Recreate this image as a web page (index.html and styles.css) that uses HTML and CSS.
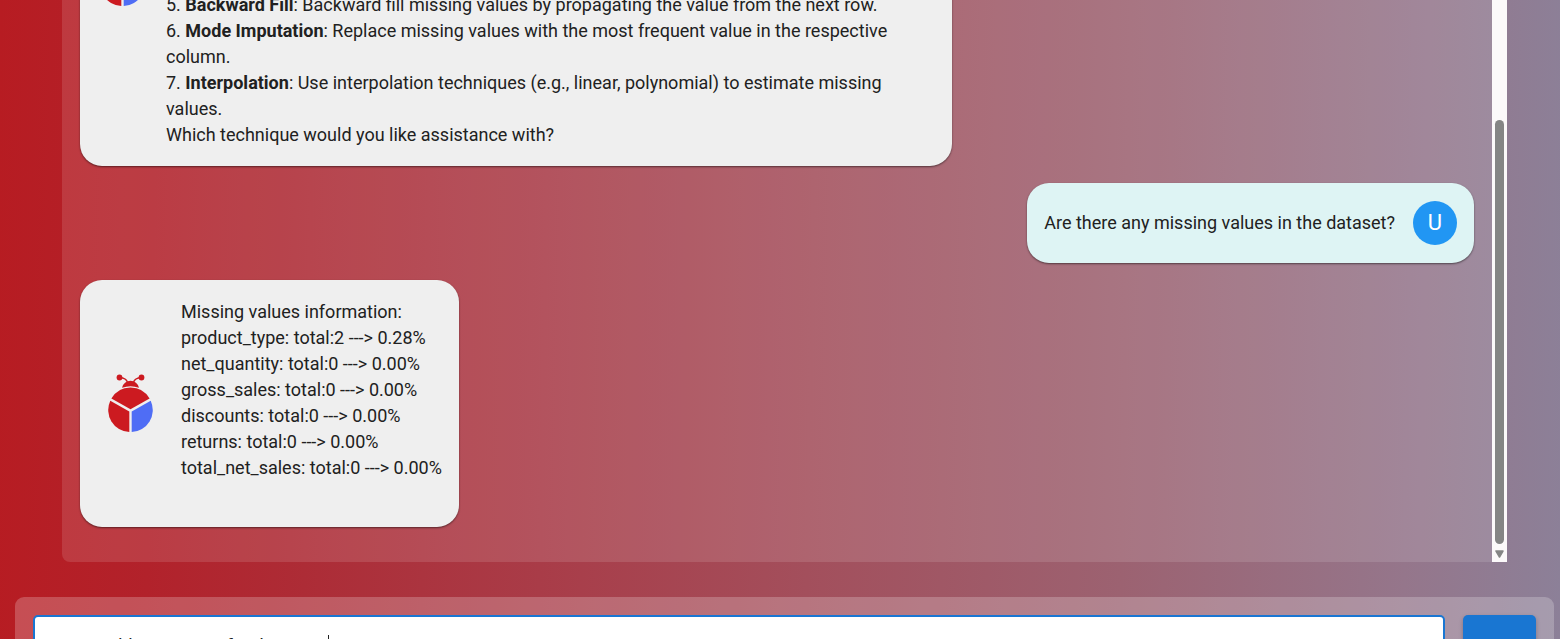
FILE: index.html
```html
<!DOCTYPE html>
<html lang="en">
<head>
<meta charset="utf-8">
<title>Data assistant</title>
<link rel="stylesheet" href="styles.css">
</head>
<body>
<svg class="defs" aria-hidden="true">
  <symbol id="bug" viewBox="0 0 45 59">
    <g fill="#cc1a20">
      <circle cx="11.5" cy="3.5" r="2.9"/>
      <circle cx="33.5" cy="3.5" r="2.9"/>
      <path d="M14 13.700a8.700 8.700 0 0 1 17 0q-8.500-3-17 0Z"/>
      <path d="M3.400 24.500a22 22 0 0 1 38.200 0L22.500 35.200Z"/>
      <path d="M2.300 26.700a22 22 0 0 0 19 31.300V37.400Z"/>
    </g>
    <path d="M11.500 3.500q7 .5 8 5M33.500 3.500q-7 .5-8 5" fill="none" stroke="#cc1a20" stroke-width="1.300"/>
    <path d="M42.700 26.700a22 22 0 0 1-19 31.300V37.400Z" fill="#4f6df5"/>
  </symbol>
</svg>
<main class="chat">
  <div class="messages">
    <article class="bubble bot long">
      <svg class="bug" role="img" aria-label="Assistant"><use href="#bug"/></svg>
      <div class="text">
        <p>5. <b>Backward Fill</b>: Backward fill missing values by propagating the value from the next row.</p>
        <p>6. <b>Mode Imputation</b>: Replace missing values with the most frequent value in the respective column.</p>
        <p>7. <b>Interpolation</b>: Use interpolation techniques (e.g., linear, polynomial) to estimate missing values.</p>
        <p>Which technique would you like assistance with?</p>
      </div>
    </article>
    <article class="bubble user">
      <p>Are there any missing values in the dataset?</p>
      <span class="avatar">U</span>
    </article>
    <article class="bubble bot report">
      <svg class="bug" role="img" aria-label="Assistant"><use href="#bug"/></svg>
      <div class="text">
        <p>Missing values information:</p>
        <p>product_type: total:2 ---&gt; 0.28%</p>
        <p>net_quantity: total:0 ---&gt; 0.00%</p>
        <p>gross_sales: total:0 ---&gt; 0.00%</p>
        <p>discounts: total:0 ---&gt; 0.00%</p>
        <p>returns: total:0 ---&gt; 0.00%</p>
        <p>total_net_sales: total:0 ---&gt; 0.00%</p>
      </div>
    </article>
  </div>
  <div class="track" aria-hidden="true">
    <div class="thumb"></div>
    <svg class="arrow" viewBox="0 0 9 8"><path d="M1 1h7L4.500 7Z" fill="#858585" stroke="#858585" stroke-linejoin="round" stroke-width="1.500"/></svg>
  </div>
</main>
<form class="composer">
  <div class="entry">
    <input class="field" type="text" aria-label="Message" value="Give a table summary for datasets">
    <span class="caret" aria-hidden="true"></span>
  </div>
  <button class="send" type="button">SEND</button>
</form>
</body>
</html>
```
FILE: styles.css
```css
* { box-sizing: border-box; }
body {
  margin: 0;
  height: 100vh;
  overflow: hidden;
  font: 18px/26px Roboto, sans-serif;
  color: #212121;
  background: linear-gradient(91deg, #b71c22 0%, #b2222b 10%, #ad2c36 20%, #a93c48 35%, #a34f5c 52%, #9c6271 72%, #95768b 90%, #8c8098 100%);
}
p { margin: 0; }
.defs { position: absolute; width: 0; height: 0; }
.chat {
  display: flex;
  height: calc(100vh - 77px);
  margin: 0 53px 0 62px;
  border-radius: 0 0 0 8px;
  background: rgba(255, 255, 255, 0.12);
}
.messages {
  flex: 1;
  display: flex;
  flex-direction: column;
  justify-content: flex-end;
  gap: 17px;
  padding: 0 18px 35px;
  overflow: hidden;
}
.bubble {
  display: flex;
  align-items: center;
  flex: none;
  padding: 18px 17px;
  border-radius: 22px;
  box-shadow: 0 1px 2px rgba(0, 0, 0, 0.5);
}
.bot { align-self: flex-start; background: #efefef; }
.user { align-self: flex-end; gap: 18px; background: #def4f4; }
.long { width: 872px; min-height: 378px; }
.long .text { align-self: flex-end; }
.report .text { padding: 1px 0 28px; }
.bug { flex: none; width: 45px; height: 59px; margin: 0 28px 0 11px; }
.long .bug { margin: 0 21px 0 3px; }
.avatar {
  display: grid;
  place-items: center;
  width: 44px;
  height: 44px;
  border-radius: 50%;
  font-size: 22px;
  color: #fff;
  background: #2196f3;
}
.track {
  display: flex;
  flex-direction: column;
  align-items: center;
  width: 15px;
  padding: 120px 0 4px;
  background: #fcf9fa;
}
.thumb { flex: 1; width: 9px; border-radius: 5px; background: #858585; }
.arrow { width: 9px; height: 8px; margin-top: 6px; }
.composer {
  display: flex;
  gap: 18px;
  margin: 35px 6px 0 15px;
  padding: 18px;
  border-radius: 9px;
  background: rgba(255, 255, 255, 0.22);
}
.entry { position: relative; flex: 1; }
.field {
  display: block;
  width: 100%;
  height: 61px;
  padding: 0 14px;
  border: 2px solid #1976d2;
  border-radius: 5px;
  font: inherit;
  color: inherit;
  background: #fff;
}
.caret { position: absolute; left: 295px; top: 20px; width: 1px; height: 21px; background: #212121; }
.send {
  width: 73px;
  border: 0;
  border-radius: 5px;
  font: 500 15px/26px Roboto, sans-serif;
  color: #fff;
  background: #1976d2;
  box-shadow: 0 2px 4px rgba(0, 0, 0, 0.25);
}
```
